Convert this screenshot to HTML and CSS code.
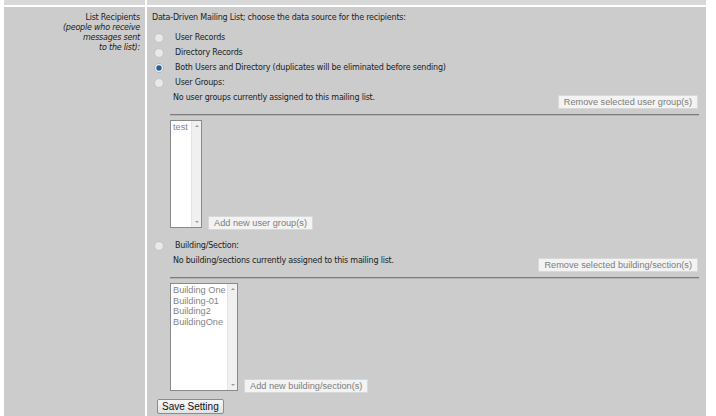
FILE: index.html
```html
<!DOCTYPE html>
<html>
<head>
<meta charset="utf-8">
<link rel="stylesheet" href="styles.css">
</head>
<body>
<div class="frame">
  <div class="cell top-cell"></div>
  <div class="cell top-cell"></div>
  <div class="cell label-cell">
    <div class="label">List Recipients</div>
    <div class="hint">(people who receive<br>messages sent<br>to the list):</div>
  </div>
  <div class="cell content">
    <p class="intro">Data-Driven Mailing List; choose the data source for the recipients:</p>
    <div class="option"><span class="radio"></span><span>User Records</span></div>
    <div class="option"><span class="radio"></span><span>Directory Records</span></div>
    <div class="option"><span class="radio checked"></span><span>Both Users and Directory (duplicates will be eliminated before sending)</span></div>
    <div class="option"><span class="radio"></span><span>User Groups:</span></div>
    <div class="group">
      <div class="group-head">
        <span class="note">No user groups currently assigned to this mailing list.</span>
        <span class="btn disabled">Remove selected user group(s)</span>
      </div>
      <div class="rule"></div>
      <div class="list-row">
        <div class="listbox narrow">
          <div class="items"><div>test</div></div>
          <div class="scroll"><span class="up"></span><span class="down"></span></div>
        </div>
        <span class="btn disabled add">Add new user group(s)</span>
      </div>
    </div>
    <div class="option building"><span class="radio"></span><span>Building/Section:</span></div>
    <div class="group">
      <div class="group-head">
        <span class="note">No building/sections currently assigned to this mailing list.</span>
        <span class="btn disabled">Remove selected building/section(s)</span>
      </div>
      <div class="rule"></div>
      <div class="list-row">
        <div class="listbox wide">
          <div class="items">
            <div>Building One</div>
            <div>Building-01</div>
            <div>Building2</div>
            <div>BuildingOne</div>
          </div>
          <div class="scroll"><span class="up"></span><span class="down"></span></div>
        </div>
        <span class="btn disabled add">Add new building/section(s)</span>
      </div>
    </div>
    <span class="btn save">Save Setting</span>
  </div>
</div>
</body>
</html>
```
FILE: styles.css
```css
html, body {
  margin: 0;
  padding: 0;
  background: #ffffff;
}
body {
  font-family: "DejaVu Sans", Verdana, sans-serif;
  font-size: 8px;
  letter-spacing: -0.22px;
  color: #222;
}
.frame {
  margin-left: 4px;
  width: 702px;
  display: grid;
  grid-template-columns: 141px 1fr;
  grid-template-rows: 5px auto;
  gap: 2px;
  height: 430px;
}
.cell {
  background: #cccccc;
}
.top-cell {
  background: #d8d8d8;
}
.label-cell {
  text-align: right;
  padding: 6px 5px 0 0;
  line-height: 10px;
}
.hint {
  font-style: italic;
}
.content {
  padding: 3px 7px 0 5px;
}
.intro {
  margin: 0 0 5px 0;
  line-height: 15px;
}
.option {
  display: flex;
  align-items: center;
  height: 15px;
}
.radio {
  width: 8px;
  height: 8px;
  border-radius: 50%;
  border: 1px solid #c4c4c4;
  background: #e9e9e9;
  margin: 0 11px 0 2px;
  box-sizing: content-box;
  flex: none;
}
.radio.checked {
  background: radial-gradient(circle, #1f5f9e 0 2.2px, #9ab8d4 2.8px, #f2f2f2 3.5px);
  border-color: #b8b8b8;
}
.group {
  padding-left: 18px;
}
.group-head {
  display: flex;
  justify-content: space-between;
  align-items: flex-start;
  padding-left: 3px;
}
.note {
  line-height: 15px;
}
.btn {
  display: inline-block;
  font-family: "Liberation Sans", Arial, sans-serif;
  font-size: 9.2px;
  letter-spacing: 0;
  line-height: 12px;
  padding: 0 5px;
  border: 1px solid #d8d8d8;
  background: #f3f3f3;
  color: #7d7d7d;
  white-space: nowrap;
}
.group-head .btn {
  margin-top: 5px;
  margin-right: 1px;
}
.rule {
  margin-top: 5px;
  height: 0;
  border-top: 1px solid #7c7c7c;
  border-bottom: 1px solid #b4b4b4;
}
.list-row {
  display: flex;
  align-items: flex-end;
  margin-top: 4px;
  height: 110px;
}
.listbox {
  display: flex;
  height: 106px;
  border: 1px solid #8a8a8a;
  background: #ffffff;
  margin-bottom: 2px;
}
.listbox.narrow { width: 30px; }
.listbox.wide { width: 66px; }
.items {
  flex: 1;
  min-width: 0;
  overflow: hidden;
  white-space: nowrap;
  font-family: "Liberation Sans", Arial, sans-serif;
  font-size: 9.2px;
  letter-spacing: 0;
  line-height: 10.5px;
  color: #858585;
  padding: 1px 0 0 2px;
}
.scroll {
  width: 9px;
  flex: none;
  background: #f0f0f0;
  border-left: 1px solid #e4e4e4;
  display: flex;
  flex-direction: column;
  justify-content: space-between;
  align-items: center;
  padding: 4px 0;
}
.up, .down {
  width: 0;
  height: 0;
  border-left: 2px solid transparent;
  border-right: 2px solid transparent;
}
.up { border-bottom: 2px solid #9a9a9a; }
.down { border-top: 2px solid #9a9a9a; }
.list-row .add {
  margin-left: 6px;
}
.building {
  margin-top: 8px;
}
.save {
  margin: 6px 0 0 5px;
  color: #111;
  border: 1px solid #8c8c8c;
  border-radius: 2px;
  background: linear-gradient(#f8f8f8, #e2e2e2);
  font-size: 10px;
  line-height: 13px;
  padding: 0 4px;
}
```
